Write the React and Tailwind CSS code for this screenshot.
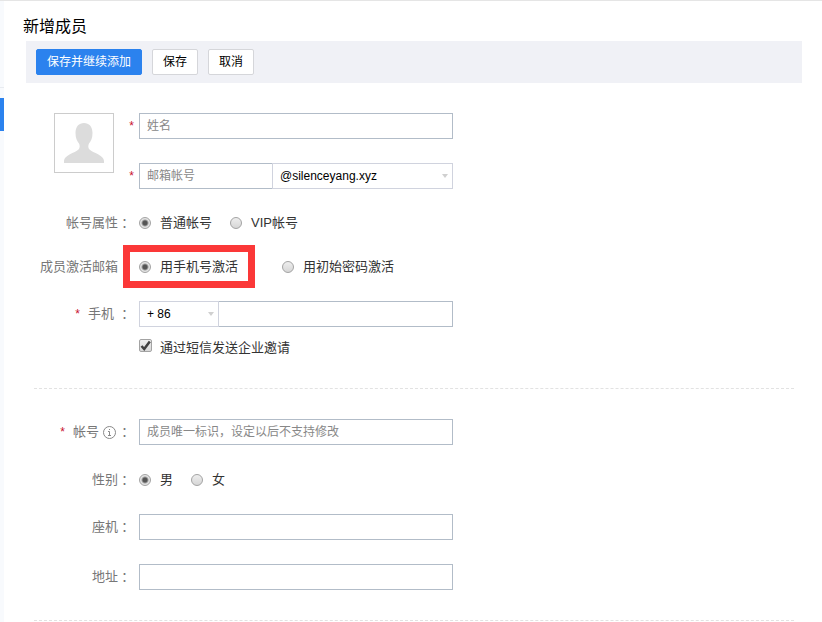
import { useState } from 'react'
import clsx from 'clsx'

const fieldClass =
  'h-[26px] border border-[#b2bcc8] bg-white px-[7px] text-xs text-black placeholder:text-[#888] placeholder:opacity-100 outline-none'

function Star({ className }) {
  return <span className={clsx('font-[Liberation_Sans] text-xs text-[#c8102e]', className)}>*</span>
}

function Label({ text, htmlFor, required, spaced, children }) {
  const Tag = htmlFor ? 'label' : 'span'
  return (
    <Tag htmlFor={htmlFor} className="flex w-[105px] shrink-0 items-center justify-end whitespace-nowrap text-[#777]">
      {required && <Star className="mr-2" />}
      <span>{text}</span>
      {children}
      <span className={clsx("font-['Noto_Sans_CJK_TC']", spaced && 'ml-1')}>：</span>
    </Tag>
  )
}

function Row({ className, children }) {
  return <div className={clsx('flex h-[26px] items-center gap-2', className)}>{children}</div>
}

function Radio({ name, value, current, onChange, highlighted, children }) {
  return (
    <label className="relative flex items-center gap-[9px]">
      <input
        type="radio"
        name={name}
        checked={current === value}
        onChange={() => onChange(value)}
        className="size-3 appearance-none rounded-full border border-[#a3a3a3] bg-linear-to-b from-[#eee] to-[#d6d6d6] checked:bg-[radial-gradient(circle,#555_0,#555_2px,#e4e4e4_4px)]"
      />
      <span>{children}</span>
      {highlighted && (
        <span className="pointer-events-none absolute -top-3 -right-[17px] -bottom-[11px] -left-4 border-[7px] border-[#fb3838]" />
      )}
    </label>
  )
}

function Select({ label, className, children }) {
  return (
    <div className={clsx('relative', className)}>
      <select
        aria-label={label}
        className="block h-[26px] w-full appearance-none border border-[#d0d3de] bg-white px-[7px] text-xs text-black outline-none"
      >
        {children}
      </select>
      <svg viewBox="0 0 6 4" className="pointer-events-none absolute top-[11px] right-[5px] h-1 w-1.5 fill-[#d0d0d0]">
        <path d="M0 0h6L3 4z" />
      </svg>
    </div>
  )
}

function Avatar() {
  return (
    <div className="size-15 border border-[#ccc] p-px">
      <svg viewBox="0 0 56 56" className="size-14 fill-[#dcdcdc]">
        <path d="M28 8c5 0 8.5 3.5 8.5 10 0 5-1.500 8-3.500 10.500-1 2-1 4.500.5 6C37 38 48 40 48 46v2H8v-2c0-6 11-8 14.500-11.500 1.500-1.500 1.500-4 .5-6-2-2.500-3.500-5.500-3.500-10.500C19.500 11.500 23 8 28 8z" />
      </svg>
    </div>
  )
}

function InfoIcon() {
  return (
    <svg viewBox="0 0 13 13" className="mr-0.5 ml-1 size-[13px] fill-none stroke-[#888]">
      <circle cx="6.5" cy="6.5" r="6" />
      <path d="M5 5.5h1.5v4M5 9.5h3M6 3.5h1" />
    </svg>
  )
}

function Button({ primary, children }) {
  return (
    <button
      type="button"
      className={clsx(
        'h-[26px] rounded-xs border px-[10px] text-xs',
        primary ? 'border-[#2b82ee] bg-[#2b82ee] text-white' : 'border-[#d5d6da] bg-white text-black'
      )}
    >
      {children}
    </button>
  )
}

export default function App() {
  const [accountType, setAccountType] = useState('normal')
  const [activation, setActivation] = useState('phone')
  const [gender, setGender] = useState('male')
  const [sendSms, setSendSms] = useState(true)

  return (
    <div className="flex min-h-screen border-t border-[#e5e5e5] bg-white font-['Liberation_Sans','Noto_Sans_CJK_SC',sans-serif] text-[13px] leading-5 text-[#333]">
      <aside className="w-1 shrink-0 bg-[#f8fafd]">
        <div className="h-[87px] border-b border-[#e8ebf0]" />
        <div className="mt-[10px] h-[33px] bg-[#2b82ee]" />
      </aside>

      <main className="min-w-0 flex-1 pr-5 pl-[22px]">
        <h1 className="-ml-[3px] pt-3.5 pb-0.5 text-base text-black">新增成员</h1>

        <div className="flex items-center gap-[10px] bg-[#f0f1f6] p-2 pl-[10px]">
          <Button primary>保存并继续添加</Button>
          <Button>保存</Button>
          <Button>取消</Button>
        </div>

        <form>
          <section className="pt-[30px]">
            <div className="flex pl-7">
              <Avatar />
              <div className="flex flex-col gap-6">
                <div className="flex items-center">
                  <Star className="w-[25px] pr-[5px] text-right" />
                  <input aria-label="姓名" placeholder="姓名" className={clsx(fieldClass, 'w-[314px]')} />
                </div>
                <div className="flex items-center">
                  <Star className="w-[25px] pr-[5px] text-right" />
                  <input aria-label="邮箱帐号" placeholder="邮箱帐号" className={clsx(fieldClass, 'w-[134px]')} />
                  <Select label="邮箱域名" className="-ml-px w-[181px]">
                    <option>@silenceyang.xyz</option>
                  </Select>
                </div>
              </div>
            </div>

            <Row className="mt-[21px]">
              <Label text="帐号属性" />
              <div className="flex gap-[18px]">
                <Radio name="type" value="normal" current={accountType} onChange={setAccountType}>
                  普通帐号
                </Radio>
                <Radio name="type" value="vip" current={accountType} onChange={setAccountType}>
                  VIP帐号
                </Radio>
              </div>
            </Row>

            <Row className="mt-[18px]">
              <Label text="成员激活邮箱" />
              <div className="flex gap-[44px]">
                <Radio name="activation" value="phone" current={activation} onChange={setActivation} highlighted>
                  用手机号激活
                </Radio>
                <Radio name="activation" value="password" current={activation} onChange={setActivation}>
                  用初始密码激活
                </Radio>
              </div>
            </Row>

            <Row className="mt-[21px]">
              <Label text="手机" htmlFor="phone" required spaced />
              <div className="flex w-[314px]">
                <Select label="国家区号" className="w-20">
                  <option>+ 86</option>
                </Select>
                <input id="phone" className={clsx(fieldClass, '-ml-px min-w-0 flex-1')} />
              </div>
            </Row>

            <label className="mt-[11px] ml-[113px] flex w-fit items-start gap-2">
              <span className="relative mt-px size-[13px]">
                <input
                  type="checkbox"
                  checked={sendSms}
                  onChange={(e) => setSendSms(e.target.checked)}
                  className="peer block size-[13px] appearance-none rounded-xs border border-[#a3a3a3] bg-linear-to-b from-[#eee] to-[#d8d8d8]"
                />
                <svg
                  viewBox="0 0 13 13"
                  strokeWidth="2.5"
                  className="pointer-events-none absolute inset-0 hidden fill-none stroke-[#404040] peer-checked:block"
                >
                  <path d="M2.5 7l2.7 3L10.8 2.5" />
                </svg>
              </span>
              <span>通过短信发送企业邀请</span>
            </label>
          </section>

          <section className="mt-[30px]">
            <div className="mx-2 border-t border-dashed border-[#e2e2e2]" />

            <Row className="mt-[30px]">
              <Label text="帐号" htmlFor="account" required>
                <InfoIcon />
              </Label>
              <input
                id="account"
                placeholder="成员唯一标识，设定以后不支持修改"
                className={clsx(fieldClass, 'w-[314px]')}
              />
            </Row>

            <Row className="mt-[22px]">
              <Label text="性别" />
              <div className="flex gap-[18px]">
                <Radio name="gender" value="male" current={gender} onChange={setGender}>
                  男
                </Radio>
                <Radio name="gender" value="female" current={gender} onChange={setGender}>
                  女
                </Radio>
              </div>
            </Row>

            <Row className="mt-[21px]">
              <Label text="座机" htmlFor="landline" />
              <input id="landline" className={clsx(fieldClass, 'w-[314px]')} />
            </Row>

            <Row className="mt-6">
              <Label text="地址" htmlFor="address" />
              <input id="address" className={clsx(fieldClass, 'w-[314px]')} />
            </Row>
          </section>

          <div className="mx-2 mt-[30px] border-t border-dashed border-[#e2e2e2]" />
        </form>
      </main>
    </div>
  )
}
